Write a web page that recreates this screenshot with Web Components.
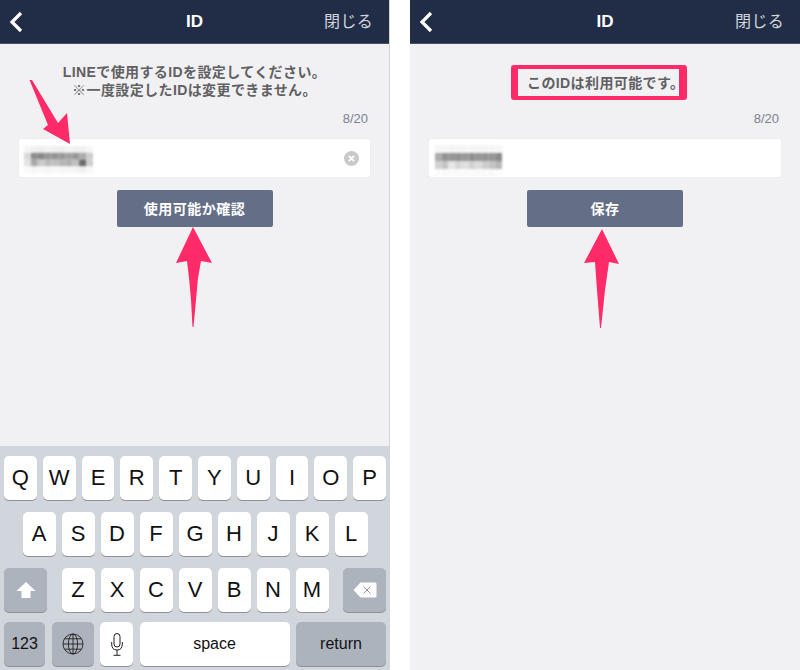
<!DOCTYPE html>
<html lang="ja">
<head>
<meta charset="utf-8">
<title>ID</title>
<style>
  html, body { margin: 0; padding: 0; background: #fff; }
  body {
    width: 800px;
    height: 670px;
    overflow: hidden;
    font-family: "Liberation Sans", "Noto Sans CJK JP", sans-serif;
  }
  .pair { display: flex; justify-content: space-between; height: 670px; }
</style>
</head>
<body>
<div class="pair">
  <id-screen>
    <id-nav></id-nav>
    <id-message>LINEで使用するIDを設定してください。<br>※一度設定したIDは変更できません。</id-message>
    <id-counter>8/20</id-counter>
    <id-field clearable cells="left"></id-field>
    <id-button>使用可能か確認</id-button>
    <ios-keyboard></ios-keyboard>
    <pink-arrow x="0" y="70" w="90" h="90" d="M29.5 10 L32 10 L58 53 L67 43 L70 74 L43 59 L48 55 Z"></pink-arrow>
    <pink-arrow x="170" y="222" w="50" h="110" d="M23 5 L42 41 L31 39 L28 56 L26 78 L23.5 105 L22.5 105 L21 78 L19 56 L17 39 L6 41 Z"></pink-arrow>
  </id-screen>
  <id-screen>
    <id-nav></id-nav>
    <id-message boxed>このIDは利用可能です。</id-message>
    <id-counter>8/20</id-counter>
    <id-field cells="right"></id-field>
    <id-button>保存</id-button>
    <pink-arrow x="169" y="222" w="50" h="110" d="M23 7 L40 42 L30 40 L26 68 L22 106 L21 106 L18 68 L16 40 L5 41 Z"></pink-arrow>
  </id-screen>
</div>

<script>
// one phone screen, the pair sits side by side in the page
const screenTemplate = document.createElement("template");
screenTemplate.innerHTML = `
<style>
  :host {
    display: flex;
    flex-direction: column;
    position: relative;
    width: 390px;
    height: 670px;
    box-sizing: border-box;
    background: #f1f1f4;
    overflow: hidden;
  }
  :host(:first-of-type) { border-right: 1px solid #d4d4d6; }
</style>
<slot></slot>
`;
class IdScreen extends HTMLElement {
  constructor() {
    super();
    this.attachShadow({ mode: "open" }).appendChild(screenTemplate.content.cloneNode(true));
  }
}
customElements.define("id-screen", IdScreen);

const navTemplate = document.createElement("template");
navTemplate.innerHTML = `
<style>
  :host {
    display: grid;
    grid-template-columns: 1fr auto 1fr;
    align-items: center;
    flex: none;
    height: 44px;
    box-sizing: border-box;
    background: #212d47;
    border-bottom: 1px solid #4a5266;
    color: #fff;
  }
  svg { display: block; margin-left: 8px; }
  .title { font-size: 17px; font-weight: 700; }
  .close {
    justify-self: end;
    margin: 0 16px 3px 0;
    font-size: 16px;
    color: #d3d6dc;
    letter-spacing: 0.3px;
  }
</style>
<svg width="16" height="24" viewBox="0 0 16 24"><path d="M13 3 L4 12 L13 21" fill="none" stroke="#fff" stroke-width="3.2"/></svg>
<span class="title">ID</span>
<span class="close">閉じる</span>
`;
class IdNav extends HTMLElement {
  constructor() {
    super();
    this.attachShadow({ mode: "open" }).appendChild(navTemplate.content.cloneNode(true));
  }
}
customElements.define("id-nav", IdNav);

const messageTemplate = document.createElement("template");
messageTemplate.innerHTML = `
<style>
  :host {
    display: flex;
    justify-content: center;
    flex: none;
    height: 37px;
    margin-top: 19px;
    font-size: 14px;
    font-weight: 700;
    line-height: 18px;
    letter-spacing: 0.4px;
    color: #606062;
    text-align: center;
    white-space: nowrap;
  }
  :host([boxed]) { margin-top: 21px; height: 35px; }
  :host([boxed]) .text {
    box-sizing: border-box;
    width: 176px;
    height: 35px;
    padding: 5px 0 0 9px;
    margin-right: 12px;
    border: solid #ff2a68;
    border-width: 4px 8px 4px 7px;
    border-radius: 3px;
    text-align: left;
  }
</style>
<div class="text"><slot></slot></div>
`;
class IdMessage extends HTMLElement {
  constructor() {
    super();
    this.attachShadow({ mode: "open" }).appendChild(messageTemplate.content.cloneNode(true));
  }
}
customElements.define("id-message", IdMessage);

const counterTemplate = document.createElement("template");
counterTemplate.innerHTML = `
<style>
  :host {
    display: block;
    flex: none;
    height: 16px;
    margin: 11px 21px 0 0;
    font-size: 13px;
    line-height: 16px;
    color: #7b8090;
    text-align: right;
  }
</style>
<slot></slot>
`;
class IdCounter extends HTMLElement {
  constructor() {
    super();
    this.attachShadow({ mode: "open" }).appendChild(counterTemplate.content.cloneNode(true));
  }
}
customElements.define("id-counter", IdCounter);

// pixelated id text, cell values are grey levels read off the picture
const MOSAICS = {
  left: { left: 5, top: 7, cellW: 6.9, cellH: 6.8, rows: [
    [246, 240, 238, 242, 240, 238, 244, 240, 240, 246],
    [216, 140, 135, 150, 146, 150, 160, 150, 172, 205],
    [226, 168, 202, 186, 192, 180, 176, 190, 105, 205],
    [250, 246, 248, 246, 248, 246, 246, 244, 240, 248]
  ]},
  right: { left: 6, top: 6, cellW: 6.7, cellH: 8, rows: [
    [246, 245, 244, 245, 245, 245, 245, 245, 245, 246],
    [172, 148, 150, 146, 152, 144, 150, 148, 150, 138],
    [208, 196, 230, 214, 224, 210, 220, 206, 196, 182],
    [252, 250, 250, 250, 250, 250, 250, 250, 250, 252]
  ]}
};

const fieldTemplate = document.createElement("template");
fieldTemplate.innerHTML = `
<style>
  :host {
    display: flex;
    align-items: center;
    position: relative;
    flex: none;
    height: 38px;
    margin: 12px 19px 0;
    padding-right: 11px;
    background: #fff;
    border-radius: 2px;
    box-shadow: 0 0 1px rgba(0, 0, 0, 0.12);
  }
  .mosaic { position: absolute; filter: blur(1px); }
  .clear { margin-left: auto; display: none; }
  :host([clearable]) .clear { display: block; }
</style>
<svg class="mosaic"></svg>
<svg class="clear" width="15" height="15" viewBox="0 0 15 15">
  <circle cx="7.5" cy="7.5" r="7.5" fill="#c9c9cb"/>
  <path d="M4.8 4.8 L10.2 10.2 M10.2 4.8 L4.8 10.2" stroke="#fff" stroke-width="1.8"/>
</svg>
`;
class IdField extends HTMLElement {
  constructor() {
    super();
    this.attachShadow({ mode: "open" }).appendChild(fieldTemplate.content.cloneNode(true));
  }

  connectedCallback() {
    const data = MOSAICS[this.getAttribute("cells")];
    const svg = this.shadowRoot.querySelector(".mosaic");
    svg.setAttribute("width", data.rows[0].length * data.cellW);
    svg.setAttribute("height", data.rows.length * data.cellH);
    svg.style.left = data.left + "px";
    svg.style.top = data.top + "px";
    svg.innerHTML = data.rows.map((row, r) => row.map((v, c) =>
      `<rect x="${c * data.cellW}" y="${r * data.cellH}" width="${data.cellW}" height="${data.cellH}" fill="rgb(${v},${v},${v})"/>`
    ).join("")).join("");
  }
}
customElements.define("id-field", IdField);

const buttonTemplate = document.createElement("template");
buttonTemplate.innerHTML = `
<style>
  :host {
    display: flex;
    align-items: center;
    justify-content: center;
    flex: none;
    align-self: center;
    box-sizing: border-box;
    width: 156px;
    height: 37px;
    margin-top: 13px;
    padding-bottom: 2px;
    background: #646f87;
    border-radius: 2px;
    color: #fff;
    font-size: 14px;
    font-weight: 700;
    letter-spacing: 0.5px;
  }
</style>
<slot></slot>
`;
class IdButton extends HTMLElement {
  constructor() {
    super();
    this.attachShadow({ mode: "open" }).appendChild(buttonTemplate.content.cloneNode(true));
  }
}
customElements.define("id-button", IdButton);

const keyTemplate = document.createElement("template");
keyTemplate.innerHTML = `
<style>
  :host {
    display: flex;
    align-items: center;
    justify-content: center;
    box-sizing: border-box;
    width: 33px;
    height: 44px;
    background: #fff;
    border-radius: 5px;
    box-shadow: 0 1px 0 #8e9198;
    color: #111;
    font-size: 22px;
  }
  :host([dark]) { background: #adb3bd; }
  :host([small]) { font-size: 16px; }
</style>
<slot></slot>
`;
class KbKey extends HTMLElement {
  constructor() {
    super();
    this.attachShadow({ mode: "open" }).appendChild(keyTemplate.content.cloneNode(true));
  }
}
customElements.define("kb-key", KbKey);

const keyboardTemplate = document.createElement("template");
keyboardTemplate.innerHTML = `
<style>
  :host {
    display: flex;
    flex-direction: column;
    gap: 12px;
    flex: none;
    box-sizing: border-box;
    height: 224px;
    margin-top: auto;
    padding: 10px 3px 0 4px;
    background: #d1d5dc;
    border-top: 0;
  }
  .row { display: flex; justify-content: center; gap: 6px; }
  .row.third { justify-content: space-between; }
  .row.third .letters { display: flex; gap: 6px; }
  .row.fourth { justify-content: space-between; margin-top: -2px; }
  svg { display: block; }
</style>
<div class="row"></div>
<div class="row"></div>
<div class="row third">
  <kb-key dark style="width:43px">
    <svg width="20" height="18" viewBox="0 0 20 18"><path d="M10 1 L19.5 10 L14.5 10 L14.5 17 L5.5 17 L5.5 10 L0.5 10 Z" fill="#fff"/></svg>
  </kb-key>
  <div class="letters"></div>
  <kb-key dark style="width:43px">
    <svg width="24" height="16" viewBox="0 0 24 16">
      <path d="M7.5 0.5 L22 0.5 Q23.5 0.5 23.5 2 L23.5 14 Q23.5 15.5 22 15.5 L7.5 15.5 L0.5 8 Z" fill="#fff"/>
      <path d="M10.5 4.5 L17.5 11.5 M17.5 4.5 L10.5 11.5" stroke="#8f95a0" stroke-width="1"/>
    </svg>
  </kb-key>
</div>
<div class="row fourth">
  <kb-key dark small style="width:41px">123</kb-key>
  <kb-key dark style="width:42px">
    <svg width="22" height="22" viewBox="0 0 22 22" fill="none" stroke="#222" stroke-width="0.9">
      <circle cx="11" cy="11" r="10"/>
      <ellipse cx="11" cy="11" rx="4.6" ry="10"/>
      <path d="M11 1 V21 M1 11 H21 M2.6 5.8 H19.4 M2.6 16.2 H19.4"/>
    </svg>
  </kb-key>
  <kb-key style="width:33px">
    <svg width="12" height="23" viewBox="0 0 12 23" fill="none" stroke="#222" stroke-width="1">
      <rect x="3" y="0.5" width="6" height="13.5" rx="3"/>
      <path d="M0.7 9 V11 Q0.7 17 6 17 Q11.3 17 11.3 11 V9 M6 17 V22 M2.5 22.3 H9.5"/>
    </svg>
  </kb-key>
  <kb-key small style="width:150px">space</kb-key>
  <kb-key dark small style="width:90px">return</kb-key>
</div>
`;
class IosKeyboard extends HTMLElement {
  constructor() {
    super();
    this.attachShadow({ mode: "open" }).appendChild(keyboardTemplate.content.cloneNode(true));
  }

  connectedCallback() {
    const rows = this.shadowRoot.querySelectorAll(".row");
    this.fill(rows[0], "QWERTYUIOP");
    this.fill(rows[1], "ASDFGHJKL");
    this.fill(rows[2].querySelector(".letters"), "ZXCVBNM");
  }

  fill(target, letters) {
    for (const letter of letters) {
      const key = document.createElement("kb-key");
      key.textContent = letter;
      target.appendChild(key);
    }
  }
}
customElements.define("ios-keyboard", IosKeyboard);

// annotation arrows drawn over the screenshot
class PinkArrow extends HTMLElement {
  constructor() {
    super();
    this.attachShadow({ mode: "open" });
  }

  connectedCallback() {
    const w = this.getAttribute("w");
    const h = this.getAttribute("h");
    this.shadowRoot.innerHTML = `
      <style>
        :host { display: block; position: absolute; left: ${this.getAttribute("x")}px; top: ${this.getAttribute("y")}px; }
        svg { display: block; }
      </style>
      <svg width="${w}" height="${h}" viewBox="0 0 ${w} ${h}"><path d="${this.getAttribute("d")}" fill="#ff2a68"/></svg>`;
  }
}
customElements.define("pink-arrow", PinkArrow);
</script>
</body>
</html>
